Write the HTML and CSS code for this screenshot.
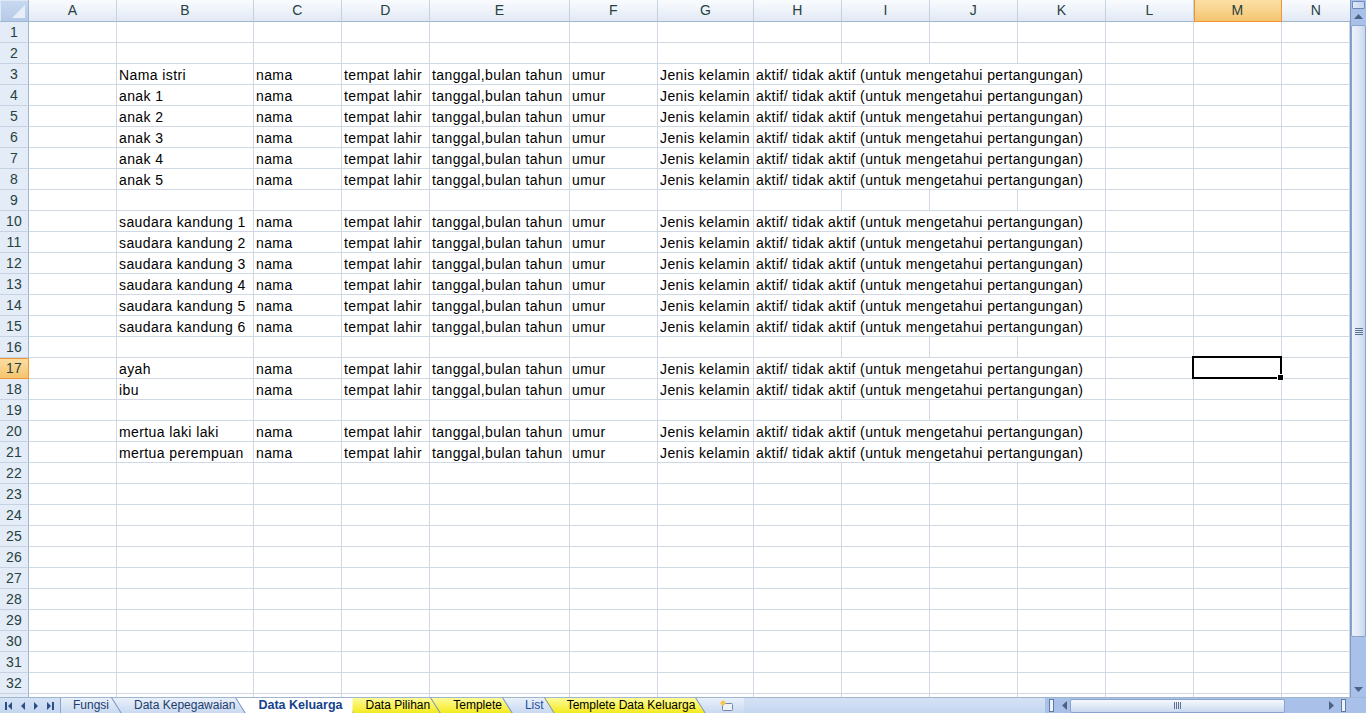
FILE: index.html
```html
<!DOCTYPE html>
<html>
<head>
<meta charset="utf-8">
<link rel="stylesheet" href="styles.css">
</head>
<body>
<div class="app">
  <div class="main">
    <div class="sheet">
      <div class="corner"><span class="tri"></span></div>
      <div class="ch">A</div><div class="ch">B</div><div class="ch">C</div><div class="ch">D</div><div class="ch">E</div><div class="ch">F</div><div class="ch">G</div><div class="ch">H</div><div class="ch">I</div><div class="ch">J</div><div class="ch">K</div><div class="ch">L</div><div class="ch sel">M</div><div class="ch last">N</div>

      <div class="rh">1</div><div class="c"></div><div class="c"></div><div class="c"></div><div class="c"></div><div class="c"></div><div class="c"></div><div class="c"></div><div class="c"></div><div class="c"></div><div class="c"></div><div class="c"></div><div class="c"></div><div class="c"></div><div class="c"></div>
      <div class="rh">2</div><div class="c"></div><div class="c"></div><div class="c"></div><div class="c"></div><div class="c"></div><div class="c"></div><div class="c"></div><div class="c"></div><div class="c"></div><div class="c"></div><div class="c"></div><div class="c"></div><div class="c"></div><div class="c"></div>

      <div class="rh">3</div><div class="c"></div><div class="c">Nama istri</div><div class="c">nama</div><div class="c">tempat lahir</div><div class="c">tanggal,bulan tahun</div><div class="c">umur</div><div class="c">Jenis kelamin</div><div class="c span4">aktif/ tidak aktif (untuk mengetahui pertangungan)</div><div class="c"></div><div class="c"></div><div class="c"></div>
      <div class="rh">4</div><div class="c"></div><div class="c">anak 1</div><div class="c">nama</div><div class="c">tempat lahir</div><div class="c">tanggal,bulan tahun</div><div class="c">umur</div><div class="c">Jenis kelamin</div><div class="c span4">aktif/ tidak aktif (untuk mengetahui pertangungan)</div><div class="c"></div><div class="c"></div><div class="c"></div>
      <div class="rh">5</div><div class="c"></div><div class="c">anak 2</div><div class="c">nama</div><div class="c">tempat lahir</div><div class="c">tanggal,bulan tahun</div><div class="c">umur</div><div class="c">Jenis kelamin</div><div class="c span4">aktif/ tidak aktif (untuk mengetahui pertangungan)</div><div class="c"></div><div class="c"></div><div class="c"></div>
      <div class="rh">6</div><div class="c"></div><div class="c">anak 3</div><div class="c">nama</div><div class="c">tempat lahir</div><div class="c">tanggal,bulan tahun</div><div class="c">umur</div><div class="c">Jenis kelamin</div><div class="c span4">aktif/ tidak aktif (untuk mengetahui pertangungan)</div><div class="c"></div><div class="c"></div><div class="c"></div>
      <div class="rh">7</div><div class="c"></div><div class="c">anak 4</div><div class="c">nama</div><div class="c">tempat lahir</div><div class="c">tanggal,bulan tahun</div><div class="c">umur</div><div class="c">Jenis kelamin</div><div class="c span4">aktif/ tidak aktif (untuk mengetahui pertangungan)</div><div class="c"></div><div class="c"></div><div class="c"></div>
      <div class="rh">8</div><div class="c"></div><div class="c">anak 5</div><div class="c">nama</div><div class="c">tempat lahir</div><div class="c">tanggal,bulan tahun</div><div class="c">umur</div><div class="c">Jenis kelamin</div><div class="c span4">aktif/ tidak aktif (untuk mengetahui pertangungan)</div><div class="c"></div><div class="c"></div><div class="c"></div>

      <div class="rh">9</div><div class="c"></div><div class="c"></div><div class="c"></div><div class="c"></div><div class="c"></div><div class="c"></div><div class="c"></div><div class="c"></div><div class="c"></div><div class="c"></div><div class="c"></div><div class="c"></div><div class="c"></div><div class="c"></div>

      <div class="rh">10</div><div class="c"></div><div class="c">saudara kandung 1</div><div class="c">nama</div><div class="c">tempat lahir</div><div class="c">tanggal,bulan tahun</div><div class="c">umur</div><div class="c">Jenis kelamin</div><div class="c span4">aktif/ tidak aktif (untuk mengetahui pertangungan)</div><div class="c"></div><div class="c"></div><div class="c"></div>
      <div class="rh">11</div><div class="c"></div><div class="c">saudara kandung 2</div><div class="c">nama</div><div class="c">tempat lahir</div><div class="c">tanggal,bulan tahun</div><div class="c">umur</div><div class="c">Jenis kelamin</div><div class="c span4">aktif/ tidak aktif (untuk mengetahui pertangungan)</div><div class="c"></div><div class="c"></div><div class="c"></div>
      <div class="rh">12</div><div class="c"></div><div class="c">saudara kandung 3</div><div class="c">nama</div><div class="c">tempat lahir</div><div class="c">tanggal,bulan tahun</div><div class="c">umur</div><div class="c">Jenis kelamin</div><div class="c span4">aktif/ tidak aktif (untuk mengetahui pertangungan)</div><div class="c"></div><div class="c"></div><div class="c"></div>
      <div class="rh">13</div><div class="c"></div><div class="c">saudara kandung 4</div><div class="c">nama</div><div class="c">tempat lahir</div><div class="c">tanggal,bulan tahun</div><div class="c">umur</div><div class="c">Jenis kelamin</div><div class="c span4">aktif/ tidak aktif (untuk mengetahui pertangungan)</div><div class="c"></div><div class="c"></div><div class="c"></div>
      <div class="rh">14</div><div class="c"></div><div class="c">saudara kandung 5</div><div class="c">nama</div><div class="c">tempat lahir</div><div class="c">tanggal,bulan tahun</div><div class="c">umur</div><div class="c">Jenis kelamin</div><div class="c span4">aktif/ tidak aktif (untuk mengetahui pertangungan)</div><div class="c"></div><div class="c"></div><div class="c"></div>
      <div class="rh">15</div><div class="c"></div><div class="c">saudara kandung 6</div><div class="c">nama</div><div class="c">tempat lahir</div><div class="c">tanggal,bulan tahun</div><div class="c">umur</div><div class="c">Jenis kelamin</div><div class="c span4">aktif/ tidak aktif (untuk mengetahui pertangungan)</div><div class="c"></div><div class="c"></div><div class="c"></div>

      <div class="rh">16</div><div class="c"></div><div class="c"></div><div class="c"></div><div class="c"></div><div class="c"></div><div class="c"></div><div class="c"></div><div class="c"></div><div class="c"></div><div class="c"></div><div class="c"></div><div class="c"></div><div class="c"></div><div class="c"></div>

      <div class="rh sel">17</div><div class="c"></div><div class="c">ayah</div><div class="c">nama</div><div class="c">tempat lahir</div><div class="c">tanggal,bulan tahun</div><div class="c">umur</div><div class="c">Jenis kelamin</div><div class="c span4">aktif/ tidak aktif (untuk mengetahui pertangungan)</div><div class="c"></div><div class="c active"><span class="cursor"><span class="handle"></span></span></div><div class="c"></div>
      <div class="rh">18</div><div class="c"></div><div class="c">ibu</div><div class="c">nama</div><div class="c">tempat lahir</div><div class="c">tanggal,bulan tahun</div><div class="c">umur</div><div class="c">Jenis kelamin</div><div class="c span4">aktif/ tidak aktif (untuk mengetahui pertangungan)</div><div class="c"></div><div class="c"></div><div class="c"></div>

      <div class="rh">19</div><div class="c"></div><div class="c"></div><div class="c"></div><div class="c"></div><div class="c"></div><div class="c"></div><div class="c"></div><div class="c"></div><div class="c"></div><div class="c"></div><div class="c"></div><div class="c"></div><div class="c"></div><div class="c"></div>

      <div class="rh">20</div><div class="c"></div><div class="c">mertua laki laki</div><div class="c">nama</div><div class="c">tempat lahir</div><div class="c">tanggal,bulan tahun</div><div class="c">umur</div><div class="c">Jenis kelamin</div><div class="c span4">aktif/ tidak aktif (untuk mengetahui pertangungan)</div><div class="c"></div><div class="c"></div><div class="c"></div>
      <div class="rh">21</div><div class="c"></div><div class="c">mertua perempuan</div><div class="c">nama</div><div class="c">tempat lahir</div><div class="c">tanggal,bulan tahun</div><div class="c">umur</div><div class="c">Jenis kelamin</div><div class="c span4">aktif/ tidak aktif (untuk mengetahui pertangungan)</div><div class="c"></div><div class="c"></div><div class="c"></div>

      <div class="rh">22</div><div class="c"></div><div class="c"></div><div class="c"></div><div class="c"></div><div class="c"></div><div class="c"></div><div class="c"></div><div class="c"></div><div class="c"></div><div class="c"></div><div class="c"></div><div class="c"></div><div class="c"></div><div class="c"></div>
      <div class="rh">23</div><div class="c"></div><div class="c"></div><div class="c"></div><div class="c"></div><div class="c"></div><div class="c"></div><div class="c"></div><div class="c"></div><div class="c"></div><div class="c"></div><div class="c"></div><div class="c"></div><div class="c"></div><div class="c"></div>
      <div class="rh">24</div><div class="c"></div><div class="c"></div><div class="c"></div><div class="c"></div><div class="c"></div><div class="c"></div><div class="c"></div><div class="c"></div><div class="c"></div><div class="c"></div><div class="c"></div><div class="c"></div><div class="c"></div><div class="c"></div>
      <div class="rh">25</div><div class="c"></div><div class="c"></div><div class="c"></div><div class="c"></div><div class="c"></div><div class="c"></div><div class="c"></div><div class="c"></div><div class="c"></div><div class="c"></div><div class="c"></div><div class="c"></div><div class="c"></div><div class="c"></div>
      <div class="rh">26</div><div class="c"></div><div class="c"></div><div class="c"></div><div class="c"></div><div class="c"></div><div class="c"></div><div class="c"></div><div class="c"></div><div class="c"></div><div class="c"></div><div class="c"></div><div class="c"></div><div class="c"></div><div class="c"></div>
      <div class="rh">27</div><div class="c"></div><div class="c"></div><div class="c"></div><div class="c"></div><div class="c"></div><div class="c"></div><div class="c"></div><div class="c"></div><div class="c"></div><div class="c"></div><div class="c"></div><div class="c"></div><div class="c"></div><div class="c"></div>
      <div class="rh">28</div><div class="c"></div><div class="c"></div><div class="c"></div><div class="c"></div><div class="c"></div><div class="c"></div><div class="c"></div><div class="c"></div><div class="c"></div><div class="c"></div><div class="c"></div><div class="c"></div><div class="c"></div><div class="c"></div>
      <div class="rh">29</div><div class="c"></div><div class="c"></div><div class="c"></div><div class="c"></div><div class="c"></div><div class="c"></div><div class="c"></div><div class="c"></div><div class="c"></div><div class="c"></div><div class="c"></div><div class="c"></div><div class="c"></div><div class="c"></div>
      <div class="rh">30</div><div class="c"></div><div class="c"></div><div class="c"></div><div class="c"></div><div class="c"></div><div class="c"></div><div class="c"></div><div class="c"></div><div class="c"></div><div class="c"></div><div class="c"></div><div class="c"></div><div class="c"></div><div class="c"></div>
      <div class="rh">31</div><div class="c"></div><div class="c"></div><div class="c"></div><div class="c"></div><div class="c"></div><div class="c"></div><div class="c"></div><div class="c"></div><div class="c"></div><div class="c"></div><div class="c"></div><div class="c"></div><div class="c"></div><div class="c"></div>
      <div class="rh">32</div><div class="c"></div><div class="c"></div><div class="c"></div><div class="c"></div><div class="c"></div><div class="c"></div><div class="c"></div><div class="c"></div><div class="c"></div><div class="c"></div><div class="c"></div><div class="c"></div><div class="c"></div><div class="c"></div>
      <div class="rh empty"></div><div class="c"></div><div class="c"></div><div class="c"></div><div class="c"></div><div class="c"></div><div class="c"></div><div class="c"></div><div class="c"></div><div class="c"></div><div class="c"></div><div class="c"></div><div class="c"></div><div class="c"></div><div class="c"></div>
    </div>
    <div class="vscroll">
      <div class="split-v"></div>
      <div class="vbtn up"><svg width="9" height="5" viewBox="0 0 9 5"><path d="M0 5 L4.5 0 L9 5 Z" fill="#4d6185"/></svg></div>
      <div class="vthumb"><span class="grip-v"></span></div>
      <div class="vtrack"></div>
      <div class="vbtn down"><svg width="9" height="5" viewBox="0 0 9 5"><path d="M0 0 L4.5 5 L9 0 Z" fill="#4d6185"/></svg></div>
    </div>
  </div>
  <div class="bottom">
    <div class="nav">
      <svg width="8" height="8" viewBox="0 0 8 8"><rect x="0" y="0" width="2" height="8" fill="#2b4f85"/><path d="M7 0 L3 4 L7 8 Z" fill="#2b4f85"/></svg>
      <svg width="6" height="8" viewBox="0 0 6 8"><path d="M5 0 L1 4 L5 8 Z" fill="#2b4f85"/></svg>
      <svg width="6" height="8" viewBox="0 0 6 8"><path d="M1 0 L5 4 L1 8 Z" fill="#2b4f85"/></svg>
      <svg width="8" height="8" viewBox="0 0 8 8"><path d="M1 0 L5 4 L1 8 Z" fill="#2b4f85"/><rect x="6" y="0" width="2" height="8" fill="#2b4f85"/></svg>
    </div>
    <div class="tabs">
      <div class="tab plain first">Fungsi</div>
      <div class="tab plain">Data Kepegawaian</div>
      <div class="tab active">Data Keluarga</div>
      <div class="tab yellow">Data Pilihan</div>
      <div class="tab yellow">Templete</div>
      <div class="tab plain blue">List</div>
      <div class="tab yellow">Templete Data Keluarga</div>
      <div class="tab plain newtab"><svg width="16" height="12" viewBox="0 0 16 12"><rect x="4.5" y="3.5" width="10" height="7" rx="1" fill="#eef3fa" stroke="#6f86a8"/><circle cx="5" cy="3" r="2.2" fill="#f5b530"/><path d="M5 0 V6 M2 3 H8" stroke="#f8d060" stroke-width="1"/></svg></div>
    </div>
    <div class="filler"></div>
    <div class="hscroll">
      <span class="hsplit"></span>
      <span class="harrow"><svg width="5" height="9" viewBox="0 0 5 9"><path d="M5 0 L0 4.5 L5 9 Z" fill="#4d6185"/></svg></span>
      <span class="hthumb"><span class="grip-h"></span></span>
      <span class="htrack"></span>
      <span class="harrow"><svg width="5" height="9" viewBox="0 0 5 9"><path d="M0 0 L5 4.5 L0 9 Z" fill="#4d6185"/></svg></span>
      <span class="hsplit"></span>
    </div>
    <div class="bcorner"></div>
  </div>
</div>
</body>
</html>
```

FILE: styles.css
```css
html, body {
  margin: 0;
  padding: 0;
  background: #ffffff;
}
body {
  font-family: "Liberation Sans", Arial, sans-serif;
  font-size: 14px;
  color: #000;
  overflow: hidden;
}
.app {
  width: 1366px;
  height: 713px;
  display: flex;
  flex-direction: column;
  overflow: hidden;
}
.main {
  display: flex;
  height: 697px;
}
.sheet {
  width: 1350px;
  height: 697px;
  overflow: hidden;
  display: grid;
  grid-template-columns: 29px 88px 137px 88px 88px 140px 88px 96px 88px 88px 88px 88px 88px 88px 68px;
  grid-template-rows: 22px;
  grid-auto-rows: 21px;
  background: #fff;
}
.corner {
  position: relative;
  box-sizing: border-box;
  background: linear-gradient(#c9d9f1, #b5c9e8);
  border-right: 1px solid #9eb6ce;
  border-bottom: 1px solid #9eb6ce;
  box-shadow: inset 1px 1px 0 #dfe8f6;
}
.tri {
  position: absolute;
  right: 3px;
  bottom: 3px;
  width: 0;
  height: 0;
  border-left: 13px solid transparent;
  border-bottom: 13px solid #e8eef8;
}
.ch {
  box-sizing: border-box;
  background: linear-gradient(#f9fbfe 0%, #eef3fa 50%, #e2e9f4 100%);
  border-right: 1px solid #c5d2e2;
  border-bottom: 1px solid #9eb6ce;
  color: #27413e;
  text-align: center;
  line-height: 21px;
  font-size: 14px;
  letter-spacing: 0.3px;
}
.ch.sel {
  background: linear-gradient(#fbdfa4 0%, #f8d38e 50%, #f5c46e 100%);
  border-right: 1px solid #f29436;
  border-bottom: 1px solid #f29436;
  box-shadow: inset 1px 0 0 #f29436;
}
.ch.last {
  border-right: none;
}
.rh {
  box-sizing: border-box;
  background: #e4ecf7;
  border-right: 1px solid #9eb6ce;
  border-bottom: 1px solid #c5d2e2;
  color: #27413e;
  text-align: center;
  line-height: 20px;
  font-size: 14px;
  letter-spacing: 0.3px;
}
.rh.sel {
  background: linear-gradient(#fbdfa4, #f5c46e);
  border-right: 1px solid #f29436;
  border-bottom: 1px solid #f29436;
  box-shadow: inset 0 1px 0 #f29436;
}
.c {
  box-sizing: border-box;
  border-right: 1px solid #d0d7e5;
  border-bottom: 1px solid #d0d7e5;
  padding: 1px 0 0 2px;
  line-height: 20px;
  white-space: nowrap;
  overflow: visible;
  letter-spacing: 0.4px;
}
.span4 {
  grid-column: span 4;
}
.active {
  position: relative;
}
.cursor {
  position: absolute;
  left: -2px;
  top: -2px;
  width: 90px;
  height: 23px;
  box-sizing: border-box;
  border: 2px solid #000;
}
.handle {
  position: absolute;
  right: -4px;
  bottom: -4px;
  width: 5px;
  height: 5px;
  background: #000;
  border: 1px solid #fff;
}
.vscroll {
  width: 16px;
  height: 697px;
  display: flex;
  flex-direction: column;
  background: #a9c1e8;
  box-sizing: border-box;
  border-left: 1px solid #7c98c6;
}
.split-v {
  height: 6px;
  margin: 1px 1px 0;
  background: linear-gradient(90deg, #dfe8f6, #c0d2ee);
  border: 1px solid #6f8bb8;
  border-radius: 1px;
}
.vbtn {
  height: 15px;
  display: flex;
  align-items: center;
  justify-content: center;
}
.vthumb {
  height: 612px;
  margin: 1px 0 0 0;
  box-sizing: border-box;
  background: linear-gradient(90deg, #eef3fb 0%, #dfe8f6 50%, #c8d7ef 100%);
  border: 1px solid #8aa4cf;
  border-radius: 2px;
  display: flex;
  align-items: center;
  justify-content: center;
}
.grip-v {
  width: 8px;
  height: 7px;
  background: repeating-linear-gradient(#5b6f8f 0 1px, transparent 1px 2px);
}
.vtrack {
  flex: 1;
}
.vbtn.down {
  height: 16px;
}
.bottom {
  height: 16px;
  display: flex;
  align-items: stretch;
  background: linear-gradient(#d5e2f5, #c4d6f0);
  border-top: 1px solid #9eb6ce;
  box-sizing: border-box;
  font-size: 12px;
}
.nav {
  width: 60px;
  display: flex;
  align-items: center;
  gap: 7px;
  padding-left: 5px;
  box-sizing: border-box;
}
.tabs {
  display: flex;
  align-items: stretch;
  height: 15px;
  isolation: isolate;
}
.tab {
  position: relative;
  padding: 0 10px 0 23px;
  margin-left: -10px;
  line-height: 15px;
  white-space: nowrap;
  color: #1e3d6b;
  z-index: 1;
}
.tab::before {
  content: "";
  position: absolute;
  inset: 0;
  z-index: -1;
  clip-path: polygon(0 0, 100% 0, 100% 100%, 10px 100%);
  background: linear-gradient(#e9f0fa, #c9d9f1);
}
.tab::after {
  content: "";
  position: absolute;
  left: 5px;
  top: -2px;
  width: 1px;
  height: 19px;
  background: #7d97c0;
  transform: rotate(-32deg);
}
.tab.first {
  margin-left: 0;
  padding-left: 13px;
  padding-right: 12px;
}
.tab.first::before {
  clip-path: none;
  border-left: 1px solid #8ba3c7;
}
.tab.first::after {
  display: none;
}
.tab.active {
  font-weight: bold;
  color: #15428b;
  font-size: 12.5px;
  z-index: 3;
}
.tab.active::before {
  background: #ffffff;
}
.tab.yellow {
  color: #000;
}
.tab.yellow::before {
  background: linear-gradient(#fffb9a, #f3ea1f);
}
.tab.blue {
  color: #1f4e9c;
}
.newtab {
  display: flex;
  align-items: center;
  padding-right: 10px;
}
.filler {
  flex: 1;
}
.hscroll {
  width: 305px;
  display: flex;
  align-items: center;
  background: #a9c1e8;
}
.hsplit {
  width: 3px;
  height: 11px;
  margin: 0 4px;
  background: #eef3fb;
  border: 1px solid #5f7aa6;
}
.harrow {
  width: 12px;
  display: flex;
  justify-content: center;
}
.hthumb {
  width: 215px;
  height: 14px;
  box-sizing: border-box;
  background: linear-gradient(#f5f8fd, #dce6f5 60%, #c9d8ef);
  border: 1px solid #8aa4cf;
  border-radius: 2px;
  display: flex;
  align-items: center;
  justify-content: center;
}
.grip-h {
  width: 7px;
  height: 7px;
  background: repeating-linear-gradient(90deg, #5b6f8f 0 1px, transparent 1px 2px);
}
.htrack {
  flex: 1;
}
.bcorner {
  width: 16px;
  background: #a9c1e8;
}
```
